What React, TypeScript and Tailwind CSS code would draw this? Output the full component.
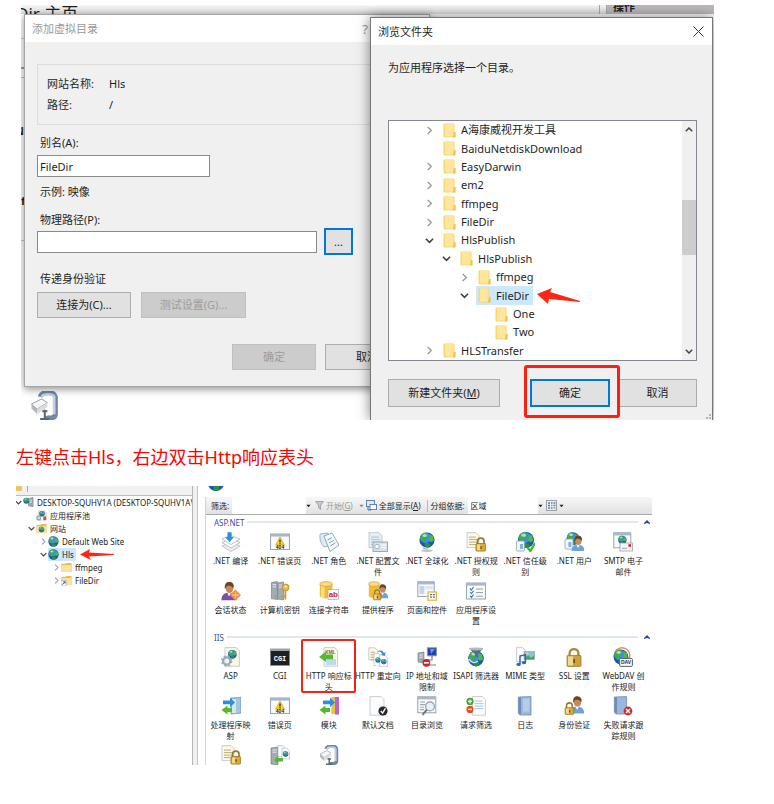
import React from "react";
import type { ReactNode } from "react";

/* ---------- drawing parts ---------- */

function Globe({ x, y, r }: { x: number; y: number; r: number }) {
  const k = r / 10;
  return (
    <g transform={`translate(${x} ${y}) scale(${k})`}>
      <circle r="10" fill="#1b55b4" />
      <circle cx="-2" cy="-3" r="7" fill="#3f8fe0" />
      <path d="M-9 -4 C-7 -9 -2 -10 0 -9 L2 -5 L-2 -2 L-4 3 L-8 1 Z" fill="#3fae3a" />
      <path d="M3 -8 L8 -5 L9 1 L5 3 L2 0 L4 -3 Z" fill="#4dbb3f" />
      <path d="M-3 4 L3 4 L5 7 L1 10 L-3 9 Z" fill="#2f9434" />
      <ellipse cx="-3" cy="-6" rx="3" ry="2" fill="#c8ecff" opacity="0.8" />
    </g>
  );
}

function Lock({ x, y, s = 1 }: { x: number; y: number; s?: number }) {
  return (
    <g transform={`translate(${x} ${y}) scale(${s})`}>
      <path d="M2 6 V3.5 A3 3 0 0 1 8 3.5 V6" fill="none" stroke="#9a7a2a" strokeWidth="1.6" />
      <rect x="0.5" y="5.5" width="9" height="7" rx="0.8" fill="#d9a93c" stroke="#94701c" strokeWidth="0.7" />
      <rect x="1.5" y="6.3" width="3" height="5.4" fill="#f3d888" />
      <rect x="4.6" y="8" width="1.2" height="2.6" fill="#6f5210" />
    </g>
  );
}

function Person({ x, y, body = "#6ea3d8", s = 1 }: { x: number; y: number; body?: string; s?: number }) {
  return (
    <g transform={`translate(${x} ${y}) scale(${s})`}>
      <path d="M0 15 C0 10 3 9 6 9 C9 9 12 10 12 15 Z" fill={body} />
      <path d="M4.5 8.5 L6 12 L8 8.5 Z" fill="#fff" />
      <ellipse cx="6.4" cy="5.5" rx="3" ry="3.7" fill="#c58a58" />
      <path d="M2.8 6 C2 1 5 0 7 0.5 C10 1 10.3 4 9.4 5.5 C8 3 6 3.5 4.6 3.4 Z" fill="#6b4426" />
    </g>
  );
}

function Sheet({ x, y, w, h, fill = "#fbfcfe", line = "#9fb6cf" }: { x: number; y: number; w: number; h: number; fill?: string; line?: string }) {
  return (
    <g>
      <path d={`M${x} ${y} h${w - 3} l3 3 v${h - 3} h${-w} z`} fill={fill} stroke="#b5b9c0" strokeWidth="0.7" />
      <path d={`M${x + 2} ${y + 4.5} h${w - 5} M${x + 2} ${y + 7} h${w - 4} M${x + 2} ${y + 9.5} h${w - 4} M${x + 2} ${y + 12} h${w - 4}`} stroke={line} strokeWidth="0.8" />
    </g>
  );
}

function Win({ x, y, w, h }: { x: number; y: number; w: number; h: number }) {
  return (
    <g>
      <rect x={x} y={y} width={w} height={h} fill="#fafbfc" stroke="#8c98a6" strokeWidth="0.9" />
      <rect x={x} y={y} width={w} height="2.6" fill="#a9b8c9" />
    </g>
  );
}

function Server({ x, y, w = 7, h = 17 }: { x: number; y: number; w?: number; h?: number }) {
  return (
    <g>
      <path d={`M${x} ${y + 1} l${w} -1 v${h} l${-w} -1 z`} fill="#a3abb3" stroke="#6c747c" strokeWidth="0.6" />
      <path d={`M${x + 1.3} ${y + 3} h${w - 2.6} M${x + 1.3} ${y + 5.2} h${w - 2.6}`} stroke="#e9edf1" strokeWidth="0.9" />
      <rect x={x + w - 2.6} y={y + h - 4} width="1.4" height="1.4" fill="#52c24a" />
    </g>
  );
}

const blueRight = "M4 4.5 H11 V1.5 L16 6.5 L11 11 V8.3 H4 Z";
const greenLeft = "M11 12 H6.5 V9.4 L0.5 14 L6.5 18.5 V16 H11 Z";

function Clamp() {
  return (
    <g>
      <path d="M7 4 C8 0 17 0 17.5 4 V16 C17.5 19 12 19.5 11.5 17" fill="none" stroke="#7187a3" strokeWidth="3.4" />
      <path d="M8 4 C9 1.6 16 1.6 16.7 4 V16" fill="none" stroke="#c3d0df" strokeWidth="1.8" />
      <path d="M1 9 L8 5.5 L12 8 L5 12.5 Z" fill="#f7f7f7" stroke="#8f949a" strokeWidth="0.6" />
      <path d="M1 9 L5 12.5 V16 L1 12 Z" fill="#b4b8bd" />
      <path d="M5 12.5 L12 8 V11 L5 16 Z" fill="#dadde0" />
      <path d="M8.5 14 H12 M10.2 13 V19 M7 19.3 H13.5" stroke="#5e6670" strokeWidth="1.4" />
    </g>
  );
}

function ErrorPage() {
  return (
    <g>
      <Win x={0.6} y={2} w={18.8} h={15.6} />
      <path d="M10 5 L14.4 13 H5.6 Z" fill="#fcd21c" stroke="#c79a10" strokeWidth="0.6" />
      <path d="M10 7.4 V10.4 M10 11.2 V12.2" stroke="#222" strokeWidth="1.2" />
      <text x="10" y="17" fontSize="5" fontWeight="700" textAnchor="middle" fill="#222" fontFamily="Liberation Sans">404</text>
    </g>
  );
}

const art: Record<string, ReactNode> = {
  compile: (
    <g>
      <path d="M1 14 L10 10.5 L19 14 L10 19.6 Z" fill="#eceef0" stroke="#a9adb2" strokeWidth="0.7" />
      <path d="M1 10.5 L10 7 L19 10.5 L10 16 Z" fill="#fafafa" stroke="#a9adb2" strokeWidth="0.7" />
      <path d="M1 7 L10 3.5 L19 7 L10 12.5 Z" fill="#fff" stroke="#a9adb2" strokeWidth="0.7" />
      <path d="M6.4 0.3 H10.6 V5 H13 L8.5 10 L4 5 H6.4 Z" fill="#2493dc" />
    </g>
  ),
  error: <ErrorPage />,
  roles: (
    <g>
      <path d="M1 2 L9 1 L13 13 L5 15 Q0 10 1 2 Z" fill="#dfe9f2" stroke="#7f99b3" strokeWidth="0.7" />
      <path d="M5 4 L13 1 L20 13 L11 19.5 Z" fill="#f5f9fc" stroke="#7794b3" strokeWidth="0.8" />
      <path d="M8.5 8 L13 5.6 M10 11 L15 8.2 M11.3 13.8 L16.4 10.8" stroke="#7aa0c6" strokeWidth="1" />
    </g>
  ),
  config: (
    <g>
      <Sheet x={1} y={0.6} w={13} h={15} fill="#e6edf3" />
      <rect x="5" y="10" width="14.6" height="9.4" fill="#d6e2ec" stroke="#8299ae" strokeWidth="0.8" />
      <circle cx="9" cy="14.6" r="2.2" fill="#fff" stroke="#8299ae" strokeWidth="0.7" />
      <path d="M13 13 H18 M13 15.4 H18" stroke="#fff" strokeWidth="1" />
    </g>
  ),
  global: (
    <g>
      <path d="M6 16 Q14 18 16 8" fill="none" stroke="#a7b2bd" strokeWidth="1.4" />
      <ellipse cx="10" cy="18.6" rx="6" ry="1.3" fill="#b8c2cc" />
      <Globe x={10} y={8} r={7.6} />
    </g>
  ),
  authrule: (
    <g>
      <Sheet x={1} y={0.6} w={12} h={15} fill="#fdf9e6" line="#a89b62" />
      <Lock x={9.4} y={5.6} s={1.08} />
    </g>
  ),
  trust: (
    <g>
      <Globe x={11} y={8} r={8} />
      <rect x="1.4" y="9" width="8" height="10" rx="1" fill="#f2f6fa" stroke="#8ba1b7" strokeWidth="0.8" />
      <rect x="5" y="12" width="3" height="5" fill="#7fb2df" />
      <path d="M12.4 15.6 L15.4 19 L20 11" fill="none" stroke="#35b81f" strokeWidth="2.2" />
    </g>
  ),
  users: (
    <g>
      <Globe x={9} y={6.6} r={6.4} />
      <rect x="1" y="7" width="8" height="10" rx="1" fill="#f2f6fa" stroke="#8ba1b7" strokeWidth="0.8" />
      <rect x="4.4" y="10" width="3" height="5" fill="#7fb2df" />
      <Person x={7.6} y={3.2} s={1.06} />
    </g>
  ),
  smtp: (
    <g>
      <Win x={0.8} y={0.8} w={17} h={15} />
      <Globe x={9.4} y={8} r={4.2} />
      <rect x="7" y="11" width="12.4" height="8" fill="#f4f4f4" stroke="#8f949a" strokeWidth="0.7" />
      <rect x="15.4" y="12.2" width="2.6" height="2.6" fill="#d42a20" />
      <path d="M9 16.4 H14" stroke="#8f949a" strokeWidth="0.8" />
    </g>
  ),
  session: (
    <g>
      <Person x={0.4} y={0.4} body="#7a4fae" s={1.26} />
      <path d="M14.4 8.4 L20 14 L14.4 19.6 L8.8 14 Z" fill="#f18a3c" />
      <path d="M11 14 H18 M14.4 10.6 V17.4" stroke="#fbd3ae" strokeWidth="1" />
    </g>
  ),
  machinekey: (
    <g>
      <Server x={1.4} y={0.6} w={6} h={18} />
      <Server x={7.6} y={1} w={6} h={18} />
      <circle cx="15.6" cy="6.4" r="3.4" fill="#f0b848" stroke="#b27a14" strokeWidth="0.7" />
      <circle cx="15.6" cy="5.4" r="1" fill="#fff" />
      <path d="M15.4 9.6 V18.6 M15.4 15 H13" stroke="#d6962a" strokeWidth="1.8" />
    </g>
  ),
  connstr: (
    <g>
      <path d="M0.8 3 V15.4 Q7 19.6 13.4 15.4 V3 Z" fill="#f3bb3a" />
      <path d="M2 4 V16 Q3.6 17 5.4 17.4 V4 Z" fill="#fbe08c" />
      <ellipse cx="7.1" cy="3" rx="6.3" ry="2.4" fill="#fbdc85" stroke="#cf9420" strokeWidth="0.6" />
      <rect x="9" y="8.6" width="10.6" height="10" fill="#fff" stroke="#a8a8a8" strokeWidth="0.7" />
      <text x="14.3" y="16.2" fontSize="8" fontWeight="700" textAnchor="middle" fill="#c9282d" fontFamily="Liberation Sans">ab</text>
    </g>
  ),
  provider: (
    <g>
      <path d="M0.8 3 V15.4 Q6 19 11.4 15.4 V3 Z" fill="#f3bb3a" />
      <ellipse cx="6.1" cy="3" rx="5.3" ry="2.3" fill="#fbdc85" stroke="#cf9420" strokeWidth="0.6" />
      <Person x={8.8} y={3} s={0.95} />
      <Lock x={5} y={8.4} s={0.84} />
    </g>
  ),
  pages: (
    <g>
      <Win x={0.8} y={0.8} w={16.4} h={14.6} />
      <rect x="2.4" y="5" width="5" height="8" fill="#c7d6e6" />
      <rect x="8.4" y="5" width="7.4" height="3.4" fill="#dfe7ef" />
      <rect x="11" y="11" width="8.4" height="8.2" fill="#fff" stroke="#dcb52e" strokeWidth="1.2" />
      <path d="M13 13.6 H15 M13 16.2 H15 M16 13.6 H18 M16 16.2 H18" stroke="#5773a0" strokeWidth="1.2" />
    </g>
  ),
  settings: (
    <g>
      <Win x={0.6} y={2} w={18.8} h={16} />
      <path d="M4 7.4 L5.4 9 L7.6 6 M4 11 L5.4 12.6 L7.6 9.8 M4 14.8 L5.4 16.4 L7.6 13.6" fill="none" stroke="#2a80c5" strokeWidth="1.1" />
      <path d="M10 8 H17 M10 11.6 H17 M10 15.2 H17" stroke="#8e9dad" strokeWidth="1" />
    </g>
  ),
  asp: (
    <g>
      <Sheet x={4} y={0.6} w={14.4} h={18.6} fill="#fcf7df" line="#fcf7df" />
      <Globe x={11.4} y={7.4} r={4.3} />
      <circle cx="5.6" cy="14" r="3.6" fill="none" stroke="#94aac4" strokeWidth="2.2" />
      <circle cx="5.6" cy="14" r="5" fill="none" stroke="#94aac4" strokeWidth="1.4" strokeDasharray="2 2" />
    </g>
  ),
  cgi: (
    <g>
      <rect x="0.4" y="2" width="19.2" height="16.4" fill="#1d1f21" stroke="#8a8f94" strokeWidth="0.8" />
      <rect x="0.4" y="2" width="19.2" height="2" fill="#9aa2aa" />
      <text x="10" y="13.6" fontSize="7" fontWeight="700" textAnchor="middle" fill="#fff" fontFamily="Liberation Mono">CGI</text>
    </g>
  ),
  headers: (
    <g>
      <Sheet x={5} y={0.6} w={13.6} h={18.6} fill="#fdf8e4" line="#fdf8e4" />
      <text x="11.4" y="6.6" fontSize="5" fontWeight="700" textAnchor="middle" fill="#6e6a4c" fontFamily="Liberation Sans">XML</text>
      <rect x="7" y="12" width="10" height="6" fill="#b9dcf3" />
      <path d="M14 7.4 V12.2 H7 V15 L0 10 L7 4.6 V7.4 Z" fill="#55b92e" />
    </g>
  ),
  redirect: (
    <g>
      <Sheet x={0.8} y={0.8} w={9} h={12} fill="#fdf8e4" line="#a89b62" />
      <Sheet x={6} y={6.6} w={8} h={12} line="#fbfcfe" />
      <Sheet x={11.6} y={8} w={8} h={11.4} line="#fbfcfe" />
      <Globe x={10} y={13} r={2.6} />
      <Globe x={15.8} y={14.6} r={2.7} />
      <path d="M9 4.6 Q14 2 16 6 L17.6 5 L16.8 9 L13 7.8 L14.4 7 Q13 4.4 9 4.6 Z" fill="#2d90d4" />
    </g>
  ),
  ip: (
    <g>
      <Server x={1} y={5} w={6} h={11} />
      <rect x="10.4" y="0.8" width="9" height="8" fill="#2040b0" stroke="#8d949c" strokeWidth="1" />
      <path d="M13 2 L18 2 L14 7 Z" fill="#6d93ee" />
      <path d="M15 9 V13 H8 M12 18 H19" stroke="#7b838b" strokeWidth="1.2" fill="none" />
      <circle cx="9.4" cy="15.8" r="3.9" fill="#d4222a" />
      <path d="M7 15.8 H11.8" stroke="#fff" strokeWidth="1.6" />
    </g>
  ),
  isapi: (
    <g>
      <Globe x={10} y={11.6} r={7.8} />
      <path d="M3 1.4 H17 L12 7 V11 L9 9 V7 Z" fill="#5d6d7b" />
      <ellipse cx="10" cy="1.9" rx="7" ry="1.5" fill="#aebcc8" />
      <path d="M3 12 Q7 18 12 14" fill="none" stroke="#c3eafc" strokeWidth="1.4" />
    </g>
  ),
  mime: (
    <g>
      <Sheet x={1.6} y={0.6} w={9} h={14} line="#fbfcfe" />
      <rect x="9" y="4.6" width="10.6" height="8" fill="#7cc4ea" stroke="#8f949a" strokeWidth="0.6" />
      <path d="M9.4 12 L13 8 L16 11 L19 8.6 V12.2 H9.4 Z" fill="#4fa83c" />
      <circle cx="12" cy="7" r="1.4" fill="#f9d33c" />
      <path d="M5 17 V9 L10.4 7.6 V15" fill="none" stroke="#3063c0" strokeWidth="1.5" />
      <ellipse cx="3.6" cy="17.4" rx="2.2" ry="1.6" fill="#3063c0" />
      <ellipse cx="9" cy="15.6" rx="2.2" ry="1.6" fill="#3063c0" />
    </g>
  ),
  ssl: (
    <g>
      <path d="M5.6 9 V5.4 A4.6 4.6 0 0 1 14.4 5.4 V9" fill="none" stroke="#a58a3c" strokeWidth="2.2" />
      <rect x="3" y="8.4" width="14" height="11" rx="0.8" fill="#cda23e" stroke="#94701c" strokeWidth="0.7" />
      <path d="M4 9.4 H9 V18.4 H4 Z" fill="#f0da93" />
      <path d="M9.3 12 H11 V16 H9.3 Z" fill="#6f5210" />
    </g>
  ),
  webdav: (
    <g>
      <circle cx="9" cy="8.6" r="7.8" fill="none" stroke="#e88850" strokeWidth="1.5" />
      <Globe x={8} y={10} r={7.4} />
      <rect x="6.6" y="11.4" width="12.8" height="8" rx="1.2" fill="#f6f8fa" stroke="#57626d" strokeWidth="1" />
      <text x="13" y="17.4" fontSize="5" fontWeight="700" textAnchor="middle" fill="#333" fontFamily="Liberation Sans">DAV</text>
    </g>
  ),
  handler: (
    <g>
      <path d="M10 2 L20 1.4 V17 L10 18 Z" fill="#a7c4e2" stroke="#6687aa" strokeWidth="0.7" />
      <path d="M11 3 H15 V17 H11 Z" fill="#d8e7f5" />
      <path d={blueRight} fill="#2b8fdc" transform="translate(-2 0)" />
      <path d={greenLeft} fill="#55b92e" />
    </g>
  ),
  modules: (
    <g>
      <path d="M12.4 1 H16 V18 H12.4 Z" fill="#e9c437" />
      <path d="M16 1 H20 V18.6 H16 Z" fill="#bd64cc" />
      <path d={blueRight} fill="#2b8fdc" />
      <path d={greenLeft} fill="#55b92e" />
    </g>
  ),
  defdoc: (
    <g>
      <Sheet x={2} y={0.6} w={14} h={18.6} line="#fbfcfe" />
      <circle cx="15" cy="15" r="4.6" fill="#26282b" />
      <path d="M12.8 15 L14.6 17.2 L17.4 12.4" fill="none" stroke="#fff" strokeWidth="1.3" />
    </g>
  ),
  browse: (
    <g>
      <Win x={0.8} y={0.8} w={18} h={16} />
      <path d="M3 6 H8 M3 8.6 H8 M3 11.2 H7 M3 13.6 H7" stroke="#9ba7b4" strokeWidth="1.1" />
      <circle cx="13" cy="10.4" r="4.4" fill="#e8f1f8" stroke="#9aa4ae" strokeWidth="1.3" />
      <path d="M9.8 13.6 L5.6 18.8" stroke="#6d7680" strokeWidth="2" />
    </g>
  ),
  reqfilter: (
    <g>
      <Sheet x={6.4} y={0.6} w={13} h={18.6} line="#8eb8e2" />
      <circle cx="4" cy="5.4" r="3.6" fill="#4aa33c" />
      <path d="M2 5.4 H6 M4 3.4 V7.4" stroke="#fff" strokeWidth="1.1" />
      <circle cx="4" cy="13.4" r="3.6" fill="#e2532c" />
      <path d="M2 13.4 H6" stroke="#fff" strokeWidth="1.2" />
    </g>
  ),
  log: (
    <g>
      <path d="M3.4 1 L16 0.6 V19 L5 19 L3.4 17.6 Z" fill="#9bb6da" stroke="#6f8cb4" strokeWidth="0.8" />
      <path d="M3.6 1.4 H6 V18.4 L3.6 17 Z" fill="#6c8bbb" />
      <rect x="8" y="2.6" width="6.6" height="13" fill="#b7cce8" />
    </g>
  ),
  auth: (
    <g>
      <Person x={6} y={-0.2} s={1.18} />
      <Lock x={0.6} y={6.4} s={0.96} />
    </g>
  ),
  failed: (
    <g>
      <path d="M1.4 1 L13.6 0.6 V18 L3 18 L1.4 16.6 Z" fill="#9bb6da" stroke="#6f8cb4" strokeWidth="0.8" />
      <path d="M1.6 1.4 H4 V17.4 L1.6 16 Z" fill="#6c8bbb" />
      <circle cx="15" cy="15" r="4.4" fill="#cf2b2b" />
      <path d="M13 13 L17 17 M17 13 L13 17" stroke="#fff" strokeWidth="1.4" />
    </g>
  ),
  serverpages: (
    <g>
      <Server x={1} y={2} w={7} h={18} />
      <Sheet x={8} y={0.6} w={8} h={11} line="#fbfcfe" />
      <Sheet x={12} y={3} w={7.6} h={11} line="#fbfcfe" />
      <Globe x={15.6} y={9} r={2.8} />
      <path d="M13 13 H8 V11 L4 15 L8 18.6 V16.4 H13 Z" fill="#55b92e" />
    </g>
  ),
  clamp: <Clamp />,
};

/* ---------- small shared pieces ---------- */

function Chevron({ open, small }: { open?: boolean; small?: boolean }) {
  return (
    <svg viewBox="0 0 10 10" className={small ? "h-[7px] w-[7px] shrink-0" : "h-[9px] w-[9px] shrink-0"} fill="none">
      {open ? <path d="M1 3 L5 7 L9 3" stroke="#404040" strokeWidth="1.8" /> : <path d="M3 1 L7 5 L3 9" stroke="#999" strokeWidth="1.5" />}
    </svg>
  );
}

function Folder() {
  return (
    <svg viewBox="0 0 13 15" className="h-[15px] w-[13px] shrink-0">
      <rect x="0.5" y="0.5" width="11" height="14" rx="0.8" fill="#f7d774" />
      <rect x="2" y="0.5" width="8.5" height="13" fill="#ffe69a" />
      <path d="M11 9 H12.6 V14.5 H10 Z" fill="#ecc252" />
    </svg>
  );
}

function Drop() {
  return (
    <svg viewBox="0 0 6 4" className="h-1 w-[5px] shrink-0">
      <path d="M0.5 0.5 H5.5 L3 3.5 Z" fill="#222" />
    </svg>
  );
}

const winButton = "flex items-center justify-center border";
const plainButton = "border-[#adadad] bg-[#e1e1e1]";
const greyButton = "border-[#bfbfbf] bg-[#cccccc] text-[#9c9c9c]";

/* ---------- first figure: two dialogs ---------- */

function AddVirtualDirectory() {
  return (
    <section className="absolute top-[9px] left-[3px] flex h-[373px] w-[406px] flex-col border border-[#a5a5a5] bg-[#f0f0f0] shadow-[0_2px_8px_rgba(0,0,0,0.45)]">
      <header className="flex h-[27px] shrink-0 items-center justify-between bg-white pr-[61px] pl-[7px] text-[#999]">
        <h2>添加虚拟目录</h2>
        <span className="text-[13px]">?</span>
      </header>
      <div className="flex flex-col pt-[22px] pl-3">
        <dl className="mr-4 grid h-[61px] grid-cols-[62px_1fr] content-center gap-y-[5px] border border-[#dcdcdc] pl-[9px]">
          <dt>网站名称:</dt>
          <dd>Hls</dd>
          <dt>路径:</dt>
          <dd>/</dd>
        </dl>
        <label htmlFor="alias" className="mt-[10px] pl-[3px]">别名(A):</label>
        <input id="alias" defaultValue="FileDir" className="mt-1 h-[22px] w-[173px] border border-[#8a8a8a] bg-white pl-[2px]" />
        <p className="mt-[7px] pl-[3px]">示例: 映像</p>
        <label htmlFor="path" className="mt-3 pl-[3px]">物理路径(P):</label>
        <div className="flex items-center gap-[7px]">
          <input id="path" className="h-[22px] w-[280px] border border-[#8a8a8a] bg-white" />
          <button type="button" className="flex h-[27px] w-[29px] items-center justify-center border-2 border-[#0078d7] bg-[#e1e1e1]">...</button>
        </div>
        <p className="mt-4 pl-[3px]">传递身份验证</p>
        <div className="mt-[5px] flex gap-[10px]">
          <button type="button" className={`${winButton} ${plainButton} h-[26px] w-[94px]`}>连接为(C)...</button>
          <button type="button" disabled className={`${winButton} ${greyButton} h-[26px] w-[105px]`}>测试设置(G)...</button>
        </div>
        <div className="mt-[26px] mr-5 flex justify-end gap-[9px]">
          <button type="button" disabled className={`${winButton} ${greyButton} h-[26px] w-[84px]`}>确定</button>
          <button type="button" className={`${winButton} ${plainButton} h-[26px] w-[84px]`}>取消</button>
        </div>
      </div>
    </section>
  );
}

type Node = { name: string; pad: string; state?: "open" | "closed"; picked?: boolean };
const nodes: Node[] = [
  { name: "A海康威视开发工具", pad: "pl-9", state: "closed" },
  { name: "BaiduNetdiskDownload", pad: "pl-9" },
  { name: "EasyDarwin", pad: "pl-9", state: "closed" },
  { name: "em2", pad: "pl-9", state: "closed" },
  { name: "ffmpeg", pad: "pl-9", state: "closed" },
  { name: "FileDir", pad: "pl-9", state: "closed" },
  { name: "HlsPublish", pad: "pl-9", state: "open" },
  { name: "HlsPublish", pad: "pl-[53px]", state: "open" },
  { name: "ffmpeg", pad: "pl-[71px]", state: "closed" },
  { name: "FileDir", pad: "pl-[71px]", state: "open", picked: true },
  { name: "One", pad: "pl-[88px]" },
  { name: "Two", pad: "pl-[88px]" },
  { name: "HLSTransfer", pad: "pl-9", state: "closed" },
];

function BrowseFolder() {
  return (
    <section className="absolute top-3 right-px bottom-0 left-[349px] flex flex-col border border-b-0 border-[#777] bg-[#f0f0f0] shadow-[0_0_12px_rgba(0,0,0,0.5)]">
      <header className="flex h-[27px] shrink-0 items-center justify-between bg-white pr-2 pl-[7px]">
        <h2>浏览文件夹</h2>
        <button type="button" aria-label="关闭">
          <svg viewBox="0 0 11 11" className="h-[11px] w-[11px]"><path d="M0.5 0.5 L10.5 10.5 M10.5 0.5 L0.5 10.5" stroke="#333" /></svg>
        </button>
      </header>
      <div className="flex flex-col pt-[15px] pr-[15px] pl-[17px]">
        <p>为应用程序选择一个目录。</p>
        <div className="mt-11 flex h-[241px] border border-[#828790] bg-white">
          <ul className="grid h-full min-w-0 flex-1 auto-rows-fr">
            {nodes.map((n, i) => (
              <li key={i} className={`flex items-center ${n.pad}`}>
                <span className="flex w-4 shrink-0 items-center">{n.state && <Chevron open={n.state === "open"} />}</span>
                <span className={`flex h-full items-center gap-[5px] pr-1 pl-[2px] ${n.picked ? "bg-[#cce8ff]" : ""}`}>
                  <Folder />
                  {n.name}
                </span>
                {n.picked && (
                  <svg viewBox="0 0 44 16" className="ml-1 h-4 w-11"><path d="M0 6 L15 0 L13 4 L43 13 V14 L12 11 L11 16 Z" fill="#fb2613" /></svg>
                )}
              </li>
            ))}
          </ul>
          <div className="flex w-[14px] flex-col items-center bg-[#f0f0f0]">
            <svg viewBox="0 0 8 5" className="mt-[6px] h-[5px] w-2" fill="none"><path d="M0.8 4.2 L4 1 L7.2 4.2" stroke="#444" strokeWidth="1.5" /></svg>
            <div className="mt-[68px] h-[55px] w-full bg-[#cdcdcd]" />
            <svg viewBox="0 0 8 5" className="mt-auto mb-[6px] h-[5px] w-2" fill="none"><path d="M0.8 0.8 L4 4 L7.2 0.8" stroke="#444" strokeWidth="1.5" /></svg>
          </div>
        </div>
        <div className="mt-[18px] flex">
          <button type="button" className={`${winButton} ${plainButton} h-7 w-[112px]`}>新建文件夹(<u>M</u>)</button>
          <div className="relative ml-[30px]">
            <button type="button" className="flex h-7 w-20 items-center justify-center border-2 border-[#0078d7] bg-[#e1e1e1]">确定</button>
            <div className="pointer-events-none absolute -top-[14px] -right-[10px] -bottom-[11px] -left-[6px] z-10 rounded-[3px] border-[3px] border-[#fb2010]" />
          </div>
          <button type="button" className={`${winButton} ${plainButton} ml-2 h-7 flex-1`}>取消</button>
        </div>
      </div>
      <svg viewBox="0 0 6 6" className="absolute right-px bottom-0 h-[6px] w-[6px]"><path d="M4 0h2v2h-2z M4 3h2v2h-2z M1 3h2v2h-2z" fill="#b5b5b5" /></svg>
    </section>
  );
}

function DialogsFigure() {
  return (
    <figure className="relative ml-[5px] h-[415px] w-auto max-w-[693px] overflow-hidden bg-white text-[11px] leading-4 text-[#1f1f1f]">
      <div className="flex h-[9px] justify-between overflow-hidden bg-gradient-to-b from-[#f7f7f7] to-[#dedede]">
        <span className="-ml-[5px] text-[17px] leading-[18px] whitespace-nowrap">Dir 主页</span>
        <span className="flex w-[115px] border-l border-[#aaa] pl-[6px]">
          <b className="flex-1 border-l border-[#aaa] bg-[#bcb8bc] pl-[6px] leading-[3px]">操作</b>
        </span>
      </div>
      <div className="flex w-[3px] flex-col overflow-hidden leading-3">
        <i className="mt-6 h-px bg-[#ccc]" />
        <i className="mt-7 h-[2px] bg-[#9a9ebf]" />
        <i className="mt-2 h-px bg-[#b9c4e4]" />
        <span className="mt-[47px] -ml-[6px] font-bold">N</span>
        <span className="mt-[58px] font-bold">f</span>
        <i className="mt-[33px] h-px bg-[#b9c4e4]" />
      </div>
      <svg viewBox="0 0 20 20" className="absolute top-[386px] left-[9px] h-[29px] w-[29px]"><Clamp /></svg>
      <AddVirtualDirectory />
      <BrowseFolder />
    </figure>
  );
}

/* ---------- second figure: IIS manager ---------- */

function SmallIcon({ kind }: { kind: "server" | "pool" | "sites" | "globe" | "folder" | "vdir" }) {
  return (
    <svg viewBox="0 0 12 12" className="h-[11px] w-[11px] shrink-0">
      {kind === "server" && <g><Server x={6} y={0.6} w={5} h={10} /><Globe x={3.6} y={4} r={3.2} /></g>}
      {kind === "pool" && <g><Sheet x={3} y={0} w={8} h={11} line="#fff" /><Globe x={6.6} y={4} r={3} /><circle cx="3" cy="8.6" r="2" fill="none" stroke="#9aa9bb" strokeWidth="1.6" /><rect x="8" y="7" width="3" height="4" fill="#d8463a" /></g>}
      {kind === "globe" && <Globe x={6} y={6} r={5.6} />}
      {(kind === "sites" || kind === "folder" || kind === "vdir") && <g><path d="M0.5 2 H5 L6 1 H11.5 V11 H0.5 Z" fill="#e9bd54" /><rect x="1" y="3.4" width="10" height="7.4" fill="#fbe3a0" /></g>}
      {kind === "sites" && <Globe x={6} y={7} r={3} />}
      {kind === "vdir" && <g><rect x="0" y="6" width="5.6" height="6" fill="#fff" stroke="#8b9ac0" strokeWidth="0.6" /><path d="M1.4 10.6 L4.4 7.4 M2.4 7.4 H4.4 V9.4" stroke="#2c50b4" fill="none" /></g>}
    </svg>
  );
}

type Site = { name: string; pad: string; icon: "server" | "pool" | "sites" | "globe" | "folder" | "vdir"; state?: "open" | "closed"; picked?: boolean };
const sites: Site[] = [
  { name: "DESKTOP-SQUHV1A (DESKTOP-SQUHV1A\\Administrator)", pad: "-ml-[3px]", icon: "server", state: "open" },
  { name: "应用程序池", pad: "pl-[10px]", icon: "pool" },
  { name: "网站", pad: "pl-[10px]", icon: "sites", state: "open" },
  { name: "Default Web Site", pad: "pl-[22px]", icon: "globe", state: "closed" },
  { name: "Hls", pad: "pl-[22px]", icon: "globe", state: "open", picked: true },
  { name: "ffmpeg", pad: "pl-[35px]", icon: "folder", state: "closed" },
  { name: "FileDir", pad: "pl-[35px]", icon: "vdir", state: "closed" },
];

function Connections() {
  return (
    <aside className="w-[177px] shrink-0 overflow-hidden border-r border-[#b5b5b5]">
      <div className="flex h-[10px] border-b border-[#bdbdbd] bg-[#f1f1f1]">
        <i className="h-[5px] w-[6px] bg-[#edc65e]" />
        <i className="ml-[5px] h-[6px] border-l border-[#aaa]" />
      </div>
      <ul>
        {sites.map((s) => (
          <li key={s.name} className={`flex h-[13px] items-center whitespace-nowrap ${s.pad}`}>
            <span className="flex w-[10px] shrink-0 items-center justify-center">{s.state && <Chevron small open={s.state === "open"} />}</span>
            <span className={`flex h-full items-center gap-[3px] pr-[2px] ${s.picked ? "bg-[#cce8ff]" : ""}`}>
              <SmallIcon kind={s.icon} />
              {s.name}
            </span>
            {s.picked && <svg viewBox="0 0 35 11" className="ml-1 h-[11px] w-[35px]"><path d="M0 5.5 L10 0 L9 3.6 L34 5 V6 L9 7.6 L11 11 Z" fill="#fb2613" /></svg>}
          </li>
        ))}
      </ul>
    </aside>
  );
}

type Feature = { icon: string; lines: string[]; marked?: boolean };
const aspnet: Feature[] = [
  { icon: "compile", lines: [".NET 编译"] },
  { icon: "error", lines: [".NET 错误页"] },
  { icon: "roles", lines: [".NET 角色"] },
  { icon: "config", lines: [".NET 配置文", "件"] },
  { icon: "global", lines: [".NET 全球化"] },
  { icon: "authrule", lines: [".NET 授权规", "则"] },
  { icon: "trust", lines: [".NET 信任级", "别"] },
  { icon: "users", lines: [".NET 用户"] },
  { icon: "smtp", lines: ["SMTP 电子", "邮件"] },
  { icon: "session", lines: ["会话状态"] },
  { icon: "machinekey", lines: ["计算机密钥"] },
  { icon: "connstr", lines: ["连接字符串"] },
  { icon: "provider", lines: ["提供程序"] },
  { icon: "pages", lines: ["页面和控件"] },
  { icon: "settings", lines: ["应用程序设", "置"] },
];
const iis: Feature[] = [
  { icon: "asp", lines: ["ASP"] },
  { icon: "cgi", lines: ["CGI"] },
  { icon: "headers", lines: ["HTTP 响应标", "头"], marked: true },
  { icon: "redirect", lines: ["HTTP 重定向"] },
  { icon: "ip", lines: ["IP 地址和域", "限制"] },
  { icon: "isapi", lines: ["ISAPI 筛选器"] },
  { icon: "mime", lines: ["MIME 类型"] },
  { icon: "ssl", lines: ["SSL 设置"] },
  { icon: "webdav", lines: ["WebDAV 创", "作规则"] },
  { icon: "handler", lines: ["处理程序映", "射"] },
  { icon: "error", lines: ["错误页"] },
  { icon: "modules", lines: ["模块"] },
  { icon: "defdoc", lines: ["默认文档"] },
  { icon: "browse", lines: ["目录浏览"] },
  { icon: "reqfilter", lines: ["请求筛选"] },
  { icon: "log", lines: ["日志"] },
  { icon: "auth", lines: ["身份验证"] },
  { icon: "failed", lines: ["失败请求跟", "踪规则"] },
  { icon: "authrule", lines: [] },
  { icon: "serverpages", lines: [] },
  { icon: "clamp", lines: [] },
];

function FeatureGroup({ title, items }: { title: string; items: Feature[] }) {
  return (
    <section>
      <header className="flex h-[14px] items-center gap-[3px] pr-[2px] pl-2 text-[#3b4da3]">
        <h3>{title}</h3>
        <i className="mr-[3px] h-[2px] flex-1 bg-[#e0e6f4]" />
        <svg viewBox="0 0 6 4" className="h-1 w-[6px]"><path d="M0 4 V3 L3 0 L6 3 V4 L3 3 Z" fill="#2745a8" /></svg>
      </header>
      <ul className="mt-[3px] mr-1 grid grid-cols-9">
        {items.map((f, i) => (
          <li key={i} className="relative flex h-[49px] flex-col items-center">
            <svg viewBox="0 0 20 20" className="h-5 w-5 shrink-0">{art[f.icon]}</svg>
            <p className="mt-[3px] text-center leading-[11px] whitespace-nowrap">
              {f.lines.map((l) => (
                <span key={l} className="block">{l}</span>
              ))}
            </p>
            {f.marked && <div className="absolute -inset-x-[3px] -top-2 bottom-[3px] z-10 rounded-[2px] border-2 border-[#fb2010]" />}
          </li>
        ))}
      </ul>
    </section>
  );
}

function Toolbar() {
  return (
    <div className="flex h-[18px] shrink-0 items-center border-b border-[#a9a9ae] bg-gradient-to-b from-[#f7f7f7] to-[#e2e2e4] pl-[5px] whitespace-nowrap">
      <label htmlFor="filter" className="w-[21px] shrink-0">筛选:</label>
      <input id="filter" className="h-full w-[74px] min-w-0 bg-white" />
      <Drop />
      <button type="button" className="ml-1 flex shrink-0 items-center gap-[2px] text-[#999]">
        <svg viewBox="0 0 9 9" className="h-[9px] w-[9px]"><path d="M0.5 0.5 H8.5 L5.6 4.4 V8.5 L3.6 7 V4.4 Z" fill="#c4c7cb" stroke="#8f9499" strokeWidth="0.7" /></svg>
        <span>开始(<u>G</u>)</span>
      </button>
      <span className="ml-[6px] flex opacity-50"><Drop /></span>
      <button type="button" className="ml-[2px] flex shrink-0 items-center gap-[2px]">
        <svg viewBox="0 0 11 11" className="h-[11px] w-[11px]"><rect x="0.5" y="0.5" width="8" height="6" fill="#dbe9f6" stroke="#5d83ae" /><rect x="4" y="4.5" width="6.5" height="5" fill="#fff" stroke="#5d83ae" /><path d="M2 7 V10 H5" stroke="#2c78c4" fill="none" /></svg>
        <span>全部显示(<u>A</u>)</span>
      </button>
      <i className="ml-[6px] h-3 border-l border-[#c9b98f]" />
      <label htmlFor="group" className="ml-[3px] w-[37px] shrink-0">分组依据:</label>
      <select id="group" className="h-full w-[70px] appearance-none bg-white pl-[3px]">
        <option>区域</option>
      </select>
      <Drop />
      <button type="button" aria-label="视图" className="ml-[3px] flex shrink-0 items-center gap-[2px]">
        <svg viewBox="0 0 11 11" className="h-[11px] w-[11px]"><rect x="0.5" y="0.5" width="10" height="10" fill="#e9edf2" stroke="#9aa3ad" /><path d="M2 3 H4 M5 3 H6.5 M7.6 3 H9.4 M2 5.5 H4 M7.6 5.5 H9.4 M2 8 H4 M5 8 H6.5" stroke="#5b7fae" strokeWidth="1.3" /><path d="M5 5.5 H6.5 M7.6 8 H9.4" stroke="#c99a3c" strokeWidth="1.3" /></svg>
        <Drop />
      </button>
    </div>
  );
}

function ManagerFigure() {
  return (
    <figure className="flex h-[279px] w-full max-w-[636px] overflow-hidden bg-white text-[8px] leading-[11px] text-[#222]">
      <Connections />
      <div className="w-[5px] shrink-0 border-r border-[#c4c4c4] bg-[#f0f0f0]" />
      <main className="ml-[7px] flex min-w-0 flex-1 flex-col">
        <div className="h-[11px] shrink-0 pl-[3px]">
          <svg viewBox="0 0 16 6" className="h-[6px] w-4"><Globe x={8} y={-3} r={8} /></svg>
        </div>
        <div className="flex min-h-0 flex-1 flex-col border-l border-[#d4d4d8]">
          <Toolbar />
          <FeatureGroup title="ASP.NET" items={aspnet} />
          <FeatureGroup title="IIS" items={iis} />
        </div>
      </main>
    </figure>
  );
}

export default function App() {
  return (
    <article className="bg-white px-4 pt-[5px] pb-[39px] font-['Noto_Sans','Noto_Sans_CJK_SC',sans-serif]">
      <DialogsFigure />
      <p className="mt-[29px] mb-[21px] text-[18px] leading-4 text-[#ff0000]">左键点击Hls，右边双击Http响应表头</p>
      <ManagerFigure />
    </article>
  );
}
